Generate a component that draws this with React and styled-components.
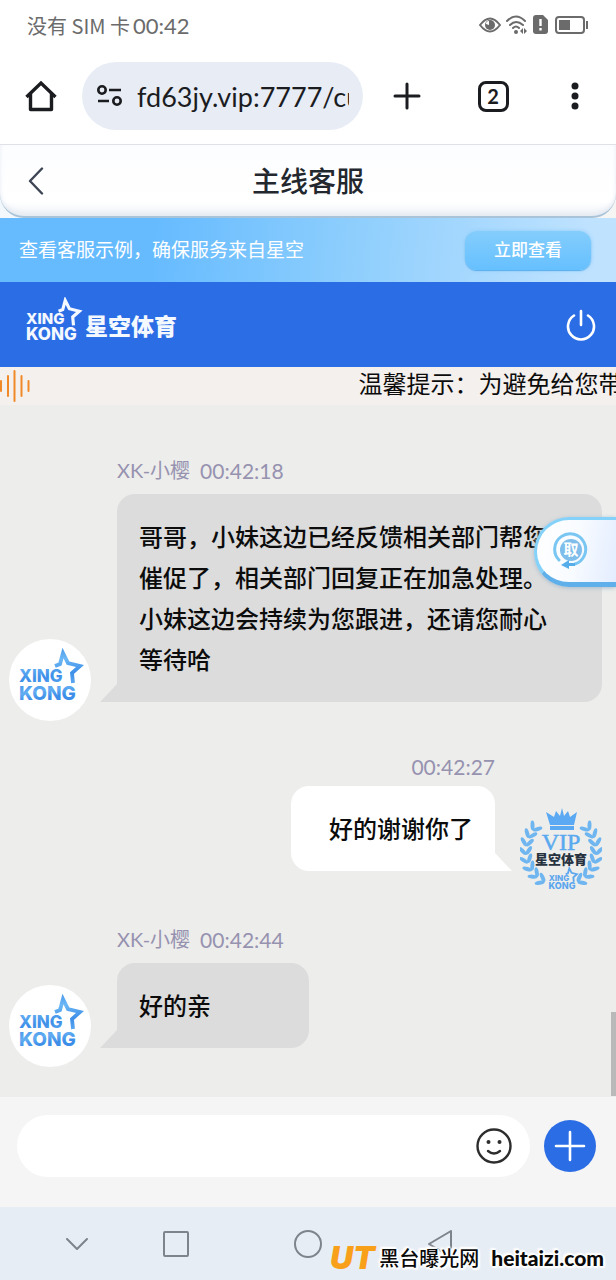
import React from "react";
import styled, { createGlobalStyle, css } from "styled-components";

const sans = `Lato, "Noto Sans CJK SC", sans-serif`;

const GlobalStyle = createGlobalStyle`
  *, *::before, *::after { box-sizing: border-box; }
  body { margin: 0; background: #ededeb; font-family: ${sans}; color: #0c0c0c; }
  button, input { font: inherit; color: inherit; border: 0; padding: 0; margin: 0; background: none; }
  svg { display: block; flex: none; }
`;

const Page = styled.div`
  display: flex;
  flex-direction: column;
  min-height: 100vh;
  overflow: hidden;
`;

/* phone status bar */
const StatusBar = styled.div`
  display: flex;
  align-items: center;
  justify-content: space-between;
  height: 51px;
  padding: 0 27px;
  background: #fff;
  color: #6b6b6b;
`;
const Carrier = styled.span`
  display: flex;
  gap: 3px;
  font-family: "Noto Sans CJK SC", sans-serif;
  font-size: 20px;
  line-height: 28px;
`;
const Clock = styled.span`
  font-family: Lato, sans-serif;
  font-size: 22px;
`;
const StatusIcons = styled.div`
  display: flex;
  align-items: center;
  gap: 5px;
  padding-bottom: 2px;
`;

/* browser toolbar */
const BrowserBar = styled.div`
  display: flex;
  align-items: center;
  height: 94px;
  padding: 0 25px 3px;
  background: #fff;
  border-bottom: 1px solid #dfe1e6;
  color: #1b1c1f;
`;
const AddressBar = styled.form`
  display: flex;
  flex: 1;
  align-items: center;
  gap: 14px;
  min-width: 0;
  height: 68px;
  margin: 0 24px 0 25px;
  padding: 0 14px;
  border-radius: 34px;
  background: #e8ecf5;
`;
const AddressInput = styled.input`
  flex: 1;
  min-width: 0;
  height: 44px;
  font-size: 27px;
  outline: none;
`;
const IconButton = styled.button`
  display: flex;
  align-items: center;
  justify-content: center;
  width: ${(p) => p.$width || 40}px;
  height: 40px;
  cursor: pointer;
`;
const BrowserActions = styled.div`
  display: flex;
  gap: 42px;
`;
const TabCount = styled.span`
  display: flex;
  align-items: center;
  justify-content: center;
  width: 31px;
  height: 31px;
  border: 3px solid #1b1c1f;
  border-radius: 8px;
  font-size: 20px;
  line-height: 24px;
  font-weight: 700;
`;

/* page header */
const HeaderWrap = styled.div`
  background: linear-gradient(90deg, #f2f8fc, #f5f5f4);
`;
const Header = styled.header`
  display: grid;
  grid-template-columns: 40px 1fr 40px;
  align-items: center;
  height: 73px;
  padding: 0 16px;
  border-bottom: 2px solid #a9c3d8;
  border-radius: 0 0 24px 24px;
  background: linear-gradient(#fcfdff, #ffffff 80%, #eef2f7);
  box-shadow: inset 0 -3px 4px #e6ebf2;
  color: #3d4454;
`;
const Title = styled.h1`
  margin: 0;
  font-size: 28px;
  line-height: 40px;
  font-weight: 500;
  text-align: center;
  color: #23272e;
`;

const Promo = styled.section`
  display: flex;
  align-items: center;
  justify-content: space-between;
  height: 64px;
  padding: 0 25px 0 19px;
  background: linear-gradient(95deg, #66bbff 25%, #8bcdfd 55%, #bfe2ff 95%);
  color: #fff;
  font-size: 19px;
  line-height: 28px;
`;
const PromoButton = styled.button`
  width: 126px;
  height: 39px;
  border-radius: 12px;
  background: linear-gradient(#84cdfc, #66c0ff);
  box-shadow: 0 1px 1px #5aaeea, 0 0 4px #8ccbf8;
  font-size: 17px;
  font-weight: 500;
`;

const BrandBar = styled.div`
  display: flex;
  align-items: center;
  justify-content: space-between;
  height: 85px;
  padding: 0 15px 0 24px;
  background: #2b6de5;
  color: #fff;
`;

const Notice = styled.div`
  display: flex;
  align-items: center;
  height: 38px;
  overflow: hidden;
  background: #f4f0ee;
`;
const NoticeText = styled.p`
  flex: 1;
  margin: 0;
  padding: 0 0 4px 53%;
  overflow: hidden;
  white-space: nowrap;
  font-size: 24px;
  line-height: 34px;
`;

/* conversation */
const Chat = styled.main`
  position: relative;
  flex: 1;
  padding: 53px 14px 29px 9px;
  background: #ededeb;
`;
const Row = styled.article`
  display: flex;
  align-items: flex-end;
  gap: ${(p) => (p.$own ? 25 : 26)}px;
  flex-direction: ${(p) => (p.$own ? "row-reverse" : "row")};
  margin-bottom: ${(p) => (p.$own ? 37 : 33)}px;
  &:last-of-type { margin-bottom: 0; }
`;
const Avatar = styled.div`
  flex: none;
  width: 82px;
  height: 82px;
  border-radius: 50%;
  background: ${(p) => (p.$plain ? "none" : "#fff")};
`;
const Body = styled.div`
  display: flex;
  flex-direction: column;
  align-items: ${(p) => (p.$own ? "flex-end" : "flex-start")};
  gap: ${(p) => (p.$own ? 6 : 10)}px;
  padding-bottom: 19px;
  min-width: 0;
`;
const Meta = styled.div`
  display: flex;
  gap: 10px;
  font-size: 21px;
  line-height: 25px;
  padding-bottom: 1px;
  color: #9692b0;
`;
const Author = styled.span`
  font-size: 20px;
`;
const Bubble = styled.p`
  position: relative;
  margin: 0;
  font-size: 24px;
  line-height: 41px;
  font-weight: 500;
  border-radius: 18px;
  ${(p) =>
    p.$own
      ? css`
          padding: 22px 22px 22px 38px;
          background: #fff;
          border-bottom-right-radius: 0;
        `
      : css`
          min-width: 192px;
          padding: 22px 50px 22px 22px;
          background: #dcdcdc;
          border-bottom-left-radius: 0;
        `}
  &::after {
    content: "";
    position: absolute;
    bottom: 0;
    width: 17px;
    height: 18px;
    background: inherit;
    ${(p) =>
      p.$own
        ? css`left: 100%; clip-path: polygon(0 0, 100% 100%, 0 100%);`
        : css`right: 100%; clip-path: polygon(100% 0, 100% 100%, 0 100%);`}
  }
`;
const FloatingButton = styled.button`
  position: absolute;
  top: 112px;
  right: 0;
  display: flex;
  align-items: center;
  width: 82px;
  height: 70px;
  padding-left: 16px;
  border: 3px solid #84d2fa;
  border-right: 0;
  border-bottom: 5px solid #5fb0ea;
  border-radius: 36px 0 0 36px;
  background: linear-gradient(100deg, #ffffff, #f8fbff 50%, #e3edff);
  box-shadow: 0 1px 4px #a9bccd;
`;
const ScrollThumb = styled.div`
  position: absolute;
  right: 0;
  bottom: 1px;
  width: 5px;
  height: 84px;
  background: #b9b9b9;
`;

const Composer = styled.form`
  display: flex;
  align-items: center;
  gap: 14px;
  height: 110px;
  padding: 0 20px 12px 17px;
  background: #f5f5f5;
`;
const Field = styled.div`
  display: flex;
  flex: 1;
  align-items: center;
  height: 62px;
  padding: 0 16px 0 24px;
  border-radius: 31px;
  background: #fff;
  color: #2d2d2d;
`;
const MessageInput = styled.input`
  flex: 1;
  min-width: 0;
  height: 44px;
  font-size: 24px;
  outline: none;
`;
const AddButton = styled.button`
  display: flex;
  align-items: center;
  justify-content: center;
  width: 52px;
  height: 52px;
  border-radius: 50%;
  background: #2b6de5;
  color: #fff;
`;

const SystemNav = styled.nav`
  position: relative;
  display: grid;
  grid-template-columns: 5fr 6fr 6fr 6fr 5fr;
  align-items: center;
  justify-items: center;
  height: 73px;
  background: #e7edf5;
  color: #7e848c;
`;
const CollapseSlot = styled.div`
  justify-self: end;
  padding-right: 13px;
`;
const Watermark = styled.div`
  position: absolute;
  right: 12px;
  bottom: 7px;
  display: flex;
  align-items: center;
  height: 30px;
  color: #0a0a0a;
  font-size: 20px;
  line-height: 30px;
  white-space: nowrap;
  text-shadow: 0 0 2px #fff, 2px 0 1px #fff, -2px 0 1px #fff, 0 2px 1px #fff, 0 -2px 1px #fff,
    2px 2px 2px #fff, -2px -2px 2px #fff;
  svg { text-shadow: none; }
`;
const WatermarkName = styled.span`
  margin-right: 12px;
  font-weight: 500;
`;
const WatermarkSite = styled.span`
  font-size: 21px;
  font-weight: 900;
`;

const STAR = "M46 27 L51 25 L54 14 L59 24 L71 27 L63 34 L64 44";

function BrandLogo() {
  return (
    <svg width="156" height="56" viewBox="0 0 156 56" role="img" aria-label="XING KONG 星空体育">
      <g fill="#f4f8ff" fontFamily="Inter, sans-serif" fontWeight="800">
        <path d={STAR} transform="translate(-3.600 -8.200) scale(0.830)" fill="none" stroke="#f4f8ff" strokeWidth="3.800" />
        <text x="2" y="27" fontSize="15">XING</text>
        <text x="2" y="43" fontSize="17">KONG</text>
      </g>
      <text x="61" y="38" fontSize="23" fontWeight="900" fill="#f4f8ff" fontFamily="'Noto Sans CJK SC', sans-serif">星空体育</text>
    </svg>
  );
}

function AgentLogo({ id }) {
  return (
    <svg width="82" height="82" viewBox="0 0 82 82" role="img" aria-label="XING KONG">
      <defs>
        <linearGradient id={id} gradientUnits="userSpaceOnUse" x1="8" y1="12" x2="16" y2="62">
          <stop offset="0" stopColor="#3f8fe6" />
          <stop offset="0.3" stopColor="#6db8f5" />
          <stop offset="0.6" stopColor="#3d8ee8" />
          <stop offset="0.85" stopColor="#62adf2" />
          <stop offset="1" stopColor="#3d8ee8" />
        </linearGradient>
      </defs>
      <g fill={`url(#${id})`} fontFamily="Inter, sans-serif" fontWeight="800">
        <path d={STAR} fill="none" stroke={`url(#${id})`} strokeWidth="3.800" />
        <text x="10" y="43" fontSize="17">XING</text>
        <text x="10" y="61" fontSize="19">KONG</text>
      </g>
    </svg>
  );
}

/* laurel leaves follow a circle of radius 35 from the foot up to the tip */
const stemAngles = [28, 42, 56, 70, 84, 98, 112, 126];
const Branch = () => (
  <g fill="#6fb6f0">
    {stemAngles.map((angle) => {
      const rad = (angle * Math.PI) / 180;
      const x = 41 - 35 * Math.sin(rad);
      const y = 43 + 35 * Math.cos(rad);
      return (
        <g key={angle} transform={`translate(${x} ${y}) rotate(${angle - 90})`}>
          <ellipse cy="-5" rx="2" ry="5" transform="rotate(-38)" />
          <ellipse cy="-5" rx="2" ry="5" transform="rotate(38)" />
        </g>
      );
    })}
  </g>
);

function VipBadge() {
  return (
    <svg width="82" height="82" viewBox="0 0 82 82" role="img" aria-label="VIP 星空体育">
      <Branch />
      <g transform="translate(82 0) scale(-1 1)"><Branch /></g>
      <path fill="#5aa9f2" d="M30 17 L26 4 L34 9 L36 3 L40 8 L42 0 L44 8 L48 3 L50 9 L57 4 L54 17 Z M30 18 H54 V22 H30 Z" />
      <g textAnchor="middle">
        <text x="41" y="42" fontSize="24" fontFamily="'Liberation Serif', serif" fill="#58a9ef" stroke="#58a9ef" strokeWidth="0.5">VIP</text>
        <text x="41" y="56" fontSize="13" fontWeight="900" fontFamily="'Noto Sans CJK SC', sans-serif" fill="#26323f">星空体育</text>
        <g fill="#5ba6ee" fontFamily="Inter, sans-serif" fontWeight="800">
          <text x="39" y="73" fontSize="8">XING</text>
          <text x="42" y="81" fontSize="9">KONG</text>
        </g>
      </g>
      <path d={STAR} fill="none" stroke="#5ba6ee" strokeWidth="4" transform="translate(25 54) scale(0.450)" />
    </svg>
  );
}

const line = { fill: "none", stroke: "currentColor", strokeLinecap: "round", strokeLinejoin: "round" };

function StatusGlyphs() {
  return (
    <StatusIcons>
      <svg width="22" height="16" viewBox="0 0 22 16" aria-hidden="true">
        <path {...line} strokeWidth="2" d="M1 8 Q11 -5 21 8 Q11 21 1 8 Z" />
        <circle cx="11" cy="8" r="5" fill="currentColor" />
        <path d="M10 8 L7 7 Q7 4 10 4 Z" fill="#fff" />
      </svg>
      <svg width="22" height="19" viewBox="0 0 22 19" aria-hidden="true">
        <g {...line} strokeWidth="2">
          <path d="M1 6 Q10 -3 19 6 M4 10 Q10 4 17 10 M7 13 Q10 10 13 13" />
        </g>
        <circle cx="10" cy="17" r="2" fill="currentColor" />
        <path fill="currentColor" d="M17 13 V19 L14 16 Z M18 13 V19 L21 16 Z" />
      </svg>
      <svg width="15" height="19" viewBox="0 0 15 19" aria-hidden="true">
        <path fill="currentColor" d="M3 0 H10 L15 5 V16 Q15 19 12 19 H3 Q0 19 0 16 V3 Q0 0 3 0 Z" />
        <path stroke="#fff" strokeWidth="2.400" d="M7.500 4 V11 M7.500 13 V15.500" />
      </svg>
      <svg width="36" height="20" viewBox="0 0 36 20" aria-hidden="true">
        <rect x="3" y="2" width="28" height="16" rx="3" fill="none" stroke="currentColor" strokeWidth="2" />
        <rect x="6" y="5" width="11" height="10" fill="currentColor" />
        <path d="M34 6 V14" stroke="currentColor" strokeWidth="2" />
      </svg>
    </StatusIcons>
  );
}

const messages = [
  {
    id: "m1",
    author: "XK-小樱",
    time: "00:42:18",
    text: "哥哥，小妹这边已经反馈相关部门帮您催促了，相关部门回复正在加急处理。小妹这边会持续为您跟进，还请您耐心等待哈",
  },
  { id: "m2", own: true, time: "00:42:27", text: "好的谢谢你了" },
  { id: "m3", author: "XK-小樱", time: "00:42:44", text: "好的亲" },
];

function Message({ id, own, author, time, text }) {
  return (
    <Row $own={own}>
      <Avatar $plain={own}>{own ? <VipBadge /> : <AgentLogo id={`logo-${id}`} />}</Avatar>
      <Body $own={own}>
        <Meta>
          {author && <Author>{author}</Author>}
          <time>{time}</time>
        </Meta>
        <Bubble $own={own}>{text}</Bubble>
      </Body>
    </Row>
  );
}

export default function App() {
  return (
    <Page>
      <GlobalStyle />
      <StatusBar>
        <Carrier>没有 SIM 卡<Clock>00:42</Clock></Carrier>
        <StatusGlyphs />
      </StatusBar>

      <BrowserBar>
        <IconButton $width={32} aria-label="主页">
          <svg width="32" height="32" viewBox="0 0 32 32">
            <path {...line} strokeWidth="3.400" strokeLinecap="butt" strokeLinejoin="miter" d="M1.500 17 L16 3 L30.500 17" />
            <path {...line} strokeWidth="3.400" d="M5.500 14 V29.500 H26.500 V14" />
          </svg>
        </IconButton>
        <AddressBar onSubmit={(e) => e.preventDefault()}>
          <svg width="27" height="24" viewBox="0 0 27 24" aria-hidden="true">
            <g {...line} strokeWidth="2.600" strokeLinecap="butt">
              <circle cx="6" cy="6" r="3.700" />
              <path d="M13 6 H25 M2 17 H13" />
              <circle cx="21" cy="17" r="3.700" />
            </g>
          </svg>
          <AddressInput aria-label="网址" defaultValue="fd63jy.vip:7777/cu" />
        </AddressBar>
        <BrowserActions>
          <IconButton aria-label="新标签页">
            <svg width="28" height="28" viewBox="0 0 28 28"><path {...line} strokeWidth="3" d="M14 2 V26 M2 14 H26" /></svg>
          </IconButton>
          <IconButton $width={48} aria-label="标签页"><TabCount>2</TabCount></IconButton>
          <IconButton $width={32} aria-label="菜单">
            <svg width="8" height="28" viewBox="0 0 8 28" fill="currentColor">
              <circle cx="4" cy="4" r="3.500" /><circle cx="4" cy="14" r="3.500" /><circle cx="4" cy="24" r="3.500" />
            </svg>
          </IconButton>
        </BrowserActions>
      </BrowserBar>

      <HeaderWrap>
        <Header>
          <IconButton aria-label="返回">
            <svg width="16" height="28" viewBox="0 0 16 28"><path {...line} strokeWidth="2.400" d="M14 1.500 L2 14 L14 26.500" /></svg>
          </IconButton>
          <Title>主线客服</Title>
        </Header>
      </HeaderWrap>

      <Promo>
        <span>查看客服示例，确保服务来自星空</span>
        <PromoButton>立即查看</PromoButton>
      </Promo>

      <BrandBar>
        <BrandLogo />
        <IconButton aria-label="退出">
          <svg width="30" height="32" viewBox="0 0 30 32">
            <path {...line} strokeWidth="2.600" d="M15 2 V16 M8 6.500 A13 13 0 1 0 22 6.500" />
          </svg>
        </IconButton>
      </BrandBar>

      <Notice>
        <svg width="32" height="32" viewBox="0 0 32 32" aria-hidden="true">
          <path d="M1 11 V21 M8 6 V26 M14.500 1 V31 M21.500 6 V26 M28.500 11 V21" stroke="#f08a28" strokeWidth="2" strokeLinecap="round" />
        </svg>
        <NoticeText>温馨提示：为避免给您带</NoticeText>
      </Notice>

      <Chat>
        {messages.map((m) => <Message key={m.id} {...m} />)}
        <FloatingButton aria-label="取">
          <svg width="36" height="38" viewBox="0 0 36 38">
            <circle cx="18" cy="18" r="11" fill="#7fbdea" />
            <path d="M6 28 A15.500 15.500 0 1 1 22 32" fill="none" stroke="#79c6f3" strokeWidth="3" strokeLinecap="round" />
            <path d="M8 33 L16 28 V31 H22 V34 H16 V37 Z" fill="#55adea" />
            <text x="18" y="23" textAnchor="middle" fontSize="15" fontWeight="700" fill="#fff" fontFamily="'Noto Sans CJK SC', sans-serif">取</text>
          </svg>
        </FloatingButton>
        <ScrollThumb />
      </Chat>

      <Composer onSubmit={(e) => e.preventDefault()}>
        <Field>
          <MessageInput aria-label="输入消息" />
          <IconButton type="button" aria-label="表情">
            <svg width="36" height="36" viewBox="0 0 36 36">
              <circle cx="18" cy="18" r="16.500" {...line} strokeWidth="2.400" />
              <path {...line} strokeWidth="2.400" d="M12 23 Q18 28 24 23" />
              <circle cx="12.500" cy="14" r="2" fill="currentColor" /><circle cx="23.500" cy="14" r="2" fill="currentColor" />
            </svg>
          </IconButton>
        </Field>
        <AddButton type="button" aria-label="更多">
          <svg width="32" height="32" viewBox="0 0 32 32"><path {...line} strokeWidth="2.600" d="M16 2 V30 M2 16 H30" /></svg>
        </AddButton>
      </Composer>

      <SystemNav>
        <CollapseSlot>
          <IconButton aria-label="收起">
            <svg width="22" height="12" viewBox="0 0 22 12"><path {...line} strokeWidth="2" d="M1 1 L11 11 L21 1" /></svg>
          </IconButton>
        </CollapseSlot>
        <IconButton aria-label="最近任务">
          <svg width="26" height="26" viewBox="0 0 26 26"><rect x="1" y="1" width="24" height="24" rx="1" {...line} strokeWidth="2" /></svg>
        </IconButton>
        <IconButton aria-label="主屏幕">
          <svg width="28" height="28" viewBox="0 0 28 28"><circle cx="14" cy="14" r="13" {...line} strokeWidth="2" /></svg>
        </IconButton>
        <IconButton aria-label="后退">
          <svg width="26" height="28" viewBox="0 0 26 28"><path {...line} strokeWidth="2" d="M24 1 V27 L2 14 Z" /></svg>
        </IconButton>
        <Watermark>
          <svg width="53" height="40" viewBox="0 0 53 40" role="img" aria-label="UT">
            <text x="4" y="31" fontSize="32" fontWeight="900" fontStyle="italic" fontFamily="Inter, sans-serif" fill="#f9a01b">UT</text>
          </svg>
          <WatermarkName>黑台曝光网</WatermarkName>
          <WatermarkSite>heitaizi.com</WatermarkSite>
        </Watermark>
      </SystemNav>
    </Page>
  );
}
